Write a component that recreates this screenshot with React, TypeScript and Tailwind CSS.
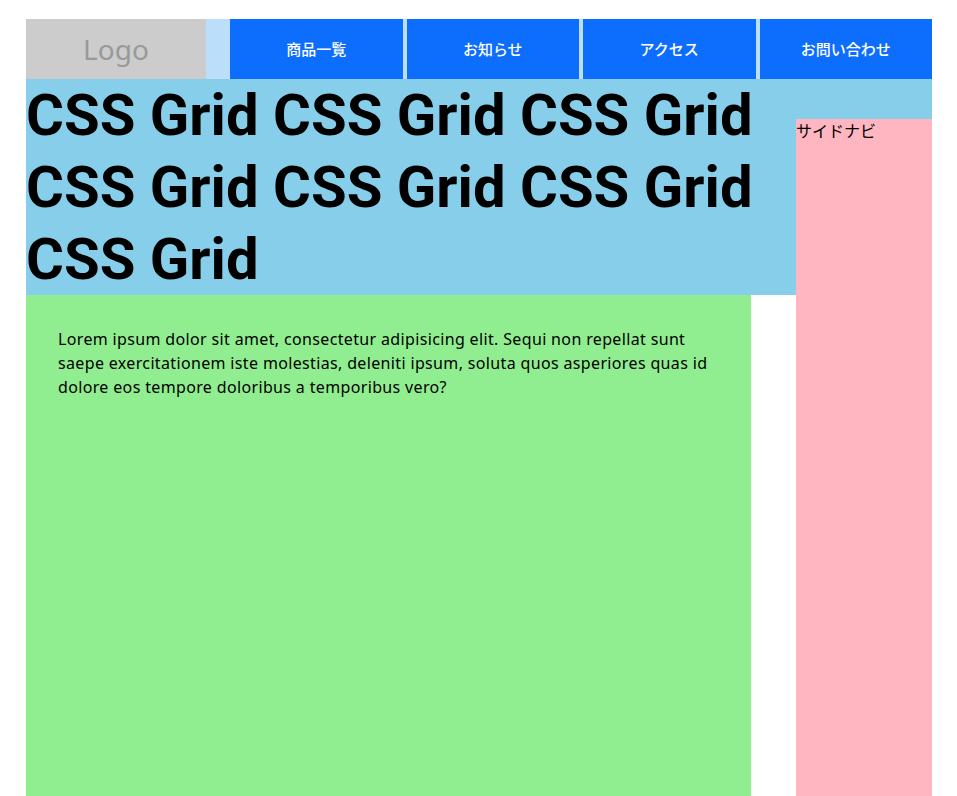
const NAV_ITEMS = ['商品一覧', 'お知らせ', 'アクセス', 'お問い合わせ']

const TITLE = 'CSS Grid CSS Grid CSS Grid CSS Grid CSS Grid CSS Grid CSS Grid'

export default function App() {
  return (
    <div
      className="mx-[26px] mt-[19px] grid w-[906px] grid-cols-[80%_5%_15%] grid-rows-[60px_auto_1fr] text-black"
      style={{ fontFamily: '"Noto Sans", "Noto Sans CJK JP", sans-serif' }}
    >
      {/* Header */}
      <header className="col-span-3 flex bg-[#bbdefb]">
        <div className="flex w-[180px] items-center justify-center bg-[#cccccc] text-[28px] text-[#999999]">
          Logo
        </div>
        <nav className="ml-6 flex flex-1 gap-1">
          {NAV_ITEMS.map((item) => (
            <a
              key={item}
              href="#"
              className="flex flex-1 items-center justify-center bg-[#0d6efd] text-[15px] font-medium text-white"
            >
              {item}
            </a>
          ))}
        </nav>
      </header>

      {/* Title */}
      <h1
        className="col-span-3 col-start-1 row-start-2 bg-[#87ceeb] pr-[136px] text-[58px] leading-[72px] font-bold"
        style={{ fontFamily: 'Roboto, "Noto Sans CJK JP", sans-serif' }}
      >
        {TITLE}
      </h1>

      {/* Main */}
      <main className="col-start-1 row-start-3 min-h-[560px] bg-[#90ee90] p-8 text-base leading-6 tracking-[0.35px]">
        <p>
          Lorem ipsum dolor sit amet, consectetur adipisicing elit. Sequi non repellat sunt saepe exercitationem iste
          molestias, deleniti ipsum, soluta quos asperiores quas id dolore eos tempore doloribus a temporibus vero?
        </p>
      </main>

      {/* Side nav */}
      <aside className="col-start-3 row-span-2 row-start-2 mt-10 bg-[#ffb6c1] text-base leading-6">サイドナビ</aside>
    </div>
  )
}
